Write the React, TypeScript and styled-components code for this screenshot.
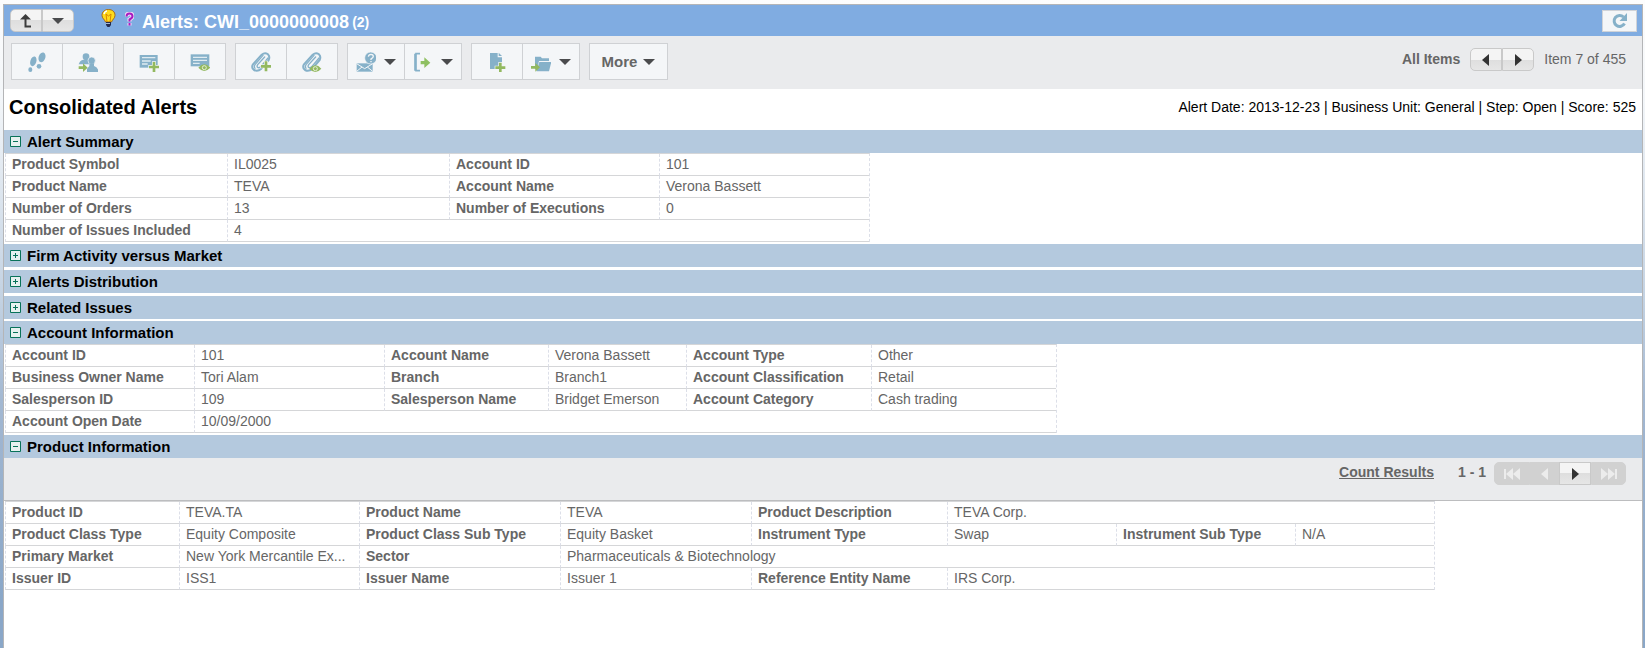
import React, { useState } from 'react';
import styled, { createGlobalStyle, css } from 'styled-components';

const GlobalStyle = createGlobalStyle`
  *, *::before, *::after { box-sizing: border-box; }
  body {
    margin: 0;
    font: 14px/21px "Liberation Sans", Arial, Helvetica, sans-serif;
    color: #666;
    background: #fff;
  }
  button { font: inherit; color: inherit; cursor: pointer; }
  h1, h2 { margin: 0; }
  svg { display: block; flex: none; }
`;

const Page = styled.div`
  min-height: 100vh;
  display: flex;
  padding: 4px 2px 0 3px;
  background: linear-gradient(#fdfdfd 0, #f3f6f9 100px, #c3d2e2 300px, #a3b8d2 400px, #8aa7c8 600px);
`;

const Frame = styled.main`
  flex: 1;
  min-width: 0;
  background: #fff;
  border: 1px solid #b4b5b7;
  border-bottom: 0;
`;

const TitleBar = styled.header`
  display: flex;
  align-items: center;
  height: 31px;
  padding: 0 5px 0 6px;
  background: #80ace1;
  color: #fff;
`;

const ButtonPair = styled.div`
  display: flex;
`;

const PillButton = styled.button<{ $width: number; $side?: 'left' | 'right' }>`
  display: flex;
  align-items: center;
  justify-content: center;
  width: ${p => p.$width}px;
  height: 23px;
  padding: 0;
  border: 1px solid #c9c9c9;
  background: linear-gradient(#f4f4f4 50%, #dedede 50%, #e6e6e6);
  border-radius: ${p => (p.$side === 'left' ? '5px 0 0 5px' : p.$side === 'right' ? '0 5px 5px 0' : '0')};
  &:disabled {
    background: #d1d1d1;
    border-color: #d1d1d1;
    cursor: default;
  }
`;

const HeaderIcons = styled.div`
  display: flex;
  align-items: center;
  gap: 9px;
  margin: 0 8px 4px 27px;
`;

const AlertName = styled.h1`
  flex: 1;
  padding-top: 2px;
  font-size: 18px;
  line-height: 24px;
`;

const AlertCount = styled.span`
  margin-left: 3px;
  font-size: 14px;
  vertical-align: 1px;
`;

const RefreshButton = styled.button`
  display: flex;
  align-items: center;
  justify-content: center;
  width: 35px;
  height: 22px;
  padding: 0;
  border: 1px solid #d0d3d8;
  background: #f4f6f8;
`;

const Toolbar = styled.div`
  display: flex;
  align-items: flex-start;
  gap: 9px;
  height: 53px;
  padding: 7px 16px 0 7px;
  background: #eaebed;
`;

const ToolGroup = styled.div`
  display: flex;
  border: 1px solid #cfd1d4;
  background: #f4f6f8;
`;

const ToolButton = styled.button<{ $menu?: boolean }>`
  box-sizing: content-box;
  display: flex;
  align-items: center;
  justify-content: center;
  gap: 8px;
  width: ${p => (p.$menu ? 56 : 50)}px;
  height: 35px;
  padding: 0;
  border: 0;
  background: none;
  & + & {
    border-left: 1px solid #cfd1d4;
  }
`;

const MoreButton = styled(ToolButton)`
  width: 77px;
  gap: 6px;
  font-size: 15px;
  font-weight: bold;
`;

const ItemNav = styled.nav`
  display: flex;
  align-items: center;
  gap: 10px;
  margin-left: auto;
  padding-top: 5px;
`;

const Strong = styled.span`
  font-weight: bold;
`;

const Heading = styled.div`
  display: flex;
  align-items: center;
  justify-content: space-between;
  height: 41px;
  padding: 0 6px 5px 5px;
  color: #000;
`;

const PageTitle = styled.h1`
  font-size: 20px;
  line-height: 24px;
`;

const Facts = styled.p`
  margin: 0;
`;

const SectionTitle = styled.h2`
  font-size: 15px;
  line-height: 23px;
`;

const SectionToggle = styled.button`
  display: flex;
  align-items: center;
  gap: 6px;
  width: 100%;
  height: 23px;
  padding: 0 6px 1px;
  border: 0;
  background: #b4c9de;
  color: #000;
  text-align: left;
`;

const SectionBox = styled.section`
  & + & {
    margin-top: 2px;
  }
  &[data-open='false'] + &[data-open='false'] {
    margin-top: 3px;
  }
`;

const Pager = styled.div`
  display: flex;
  align-items: flex-start;
  justify-content: flex-end;
  height: 43px;
  padding: 4px 16px 0;
  background: #eaebed;
  border-bottom: 1px solid #bcbdbf;
  font-weight: bold;
`;

const CountLink = styled.a`
  margin-right: 24px;
  color: inherit;
`;

const PageRange = styled.span`
  margin-right: 8px;
`;

const DataTable = styled.table`
  table-layout: fixed;
  width: min-content;
  margin-left: 1px;
  border-collapse: separate;
  border-spacing: 0;
  border-top: 1px solid #d5d6d8;
  border-right: 1px dashed #dcdfe8;
`;

const cell = css`
  height: 22px;
  padding: 0 6px;
  border-left: 1px dashed #dcdfe8;
  border-bottom: 1px solid #d5d6d8;
  text-align: left;
  white-space: nowrap;
  overflow: hidden;
  text-overflow: ellipsis;
`;

const LabelCell = styled.th`
  ${cell}
`;

const ValueCell = styled.td`
  ${cell}
`;

const Column = styled.col<{ $width: number }>`
  width: ${p => p.$width}px;
`;

const BLUE = '#86b1c9';
const GREEN = '#93b960';

const Icon = ({ children }: { children: React.ReactNode }) => (
  <svg width="20" height="20" viewBox="0 0 60 60" fill={BLUE} aria-hidden="true">
    {children}
  </svg>
);

const Plus = ({ x, y }: { x: number; y: number }) => (
  <g>
    <path d={`M${x - 6} ${y - 17}h12v11h11v12h-11v11h-12v-11h-11v-12h11z`} fill="#f4f6f8" />
    <path d={`M${x - 4} ${y - 15}h8v11h11v8h-11v11h-8v-11h-11v-8h11z`} fill={GREEN} />
  </g>
);

const Eye = ({ x, y }: { x: number; y: number }) => (
  <g>
    <path d={`M${x - 18} ${y}q18-20 36 0q-18 20-36 0z`} fill={GREEN} />
    <circle cx={x} cy={y} r="6" fill={GREEN} stroke="#e6efd8" strokeWidth="3" />
  </g>
);

const Arrow = ({ x, y }: { x: number; y: number }) => (
  <path d={`M${x} ${y - 4}h13v-9l14 13l-14 13v-9h-13z`} fill={GREEN} />
);

const Clip = () => (
  <g fill="none" stroke={BLUE} strokeWidth="6" strokeLinecap="round">
    <path d="M53 24L31 50Q20 60 9 54Q0 47 6 37L32 8Q41 1 50 6Q58 13 53 24" />
    <path d="M41 15L20 38Q16 44 21 47Q26 48 30 43L51 18M36 10L12 38Q8 44 12 49" strokeWidth="4" />
  </g>
);

const Steps = () => (
  <Icon>
    <ellipse cx="19" cy="28" rx="9" ry="15" transform="rotate(18 19 28)" />
    <ellipse cx="10" cy="53" rx="6" ry="7" />
    <ellipse cx="45" cy="16" rx="10" ry="15" transform="rotate(18 45 16)" />
    <ellipse cx="36" cy="43" rx="7" ry="7" />
  </Icon>
);

const Assign = () => (
  <Icon>
    <circle cx="24" cy="14" r="10" />
    <path d="M2 37q3-12 14-14h15l2 14z" />
    <circle cx="41" cy="26" r="11" stroke="#f4f6f8" strokeWidth="2" />
    <path d="M27 60V50l7-8v-8h14v8q12 4 14 18z" />
    <Arrow x={2} y={47} />
  </Icon>
);

const Note = ({ children }: { children: React.ReactNode }) => (
  <Icon>
    <path d="M2 9h54v38H2z" />
    <path d="M9 17h40M9 27h26M9 36h17" stroke="#dfebf1" strokeWidth="4" />
    {children}
  </Icon>
);

const ViewNote = () => (
  <Icon>
    <path d="M2 7h56v36H2z" />
    <path d="M9 16h42M9 25h42M9 34h20" stroke="#dfebf1" strokeWidth="4" />
    <Eye x={43} y={47} />
  </Icon>
);

const Mail = () => (
  <Icon>
    <path d="M2 34h48v25H2z" />
    <path d="M2 35l24 15l24-15M2 58l16-13M50 58L34 45" fill="none" stroke="#f4f6f8" strokeWidth="3" />
    <circle cx="44" cy="18" r="18" stroke="#f4f6f8" strokeWidth="2" />
    <path d="M37 14q1-7 8-7q7 1 7 6q0 4-7 8v3M45 27v4" fill="none" stroke="#f4f6f8" strokeWidth="4" />
  </Icon>
);

const Exit = () => (
  <Icon>
    <path d="M21 5H9v51h12M6 5v51" fill="none" stroke={BLUE} strokeWidth="5" />
    <g fill="#8fc062">
      <path d="M23 27h11V16l18 16l-18 16V37H23z" />
    </g>
  </Icon>
);

const NewFile = () => (
  <Icon>
    <path d="M9 3h23v13h13v35H9z" />
    <path d="M35 2l10 10H35z" />
    <Plus x={40} y={47} />
  </Icon>
);

const Folder = () => (
  <Icon>
    <path d="M12 14h17l4 5h21v8H24l-6 25h-6z" />
    <path d="M25 30h36l-7 28H16z" />
    <Arrow x={0} y={46} />
  </Icon>
);

const Caret = () => (
  <svg width="12" height="6" viewBox="0 0 12 6" aria-hidden="true">
    <path d="M0 0h12L6 6z" fill="#4a4b4d" />
  </svg>
);

const Triangle = ({ left, double, color = '#333' }: { left?: boolean; double?: boolean; color?: string }) => (
  <svg width="16" height="12" viewBox="0 0 16 12" fill={color} aria-hidden="true">
    <g transform={left ? 'matrix(-1 0 0 1 16 0)' : undefined}>
      {double ? <path d="M0 0l7 6l-7 6zM7 0l7 6l-7 6zM14 1h2v10h-2z" /> : <path d="M5 0l7 6l-7 6z" />}
    </g>
  </svg>
);

const Bulb = () => (
  <svg width="15" height="19" viewBox="0 0 15 19" aria-hidden="true">
    <path d="M7.500 .5c4 0 6.500 2.500 6.500 5.800 0 3-2.500 4-3.500 6.700h-6C3.500 10.300 1 9.300 1 6.300 1 3 3.500 .5 7.500 .5z" fill="#ffdc1c" stroke="#a56a18" />
    <path d="M5 5l1 8M10 5l-1 8M5 5l2.500 2L10 5" fill="none" stroke="#d98500" />
    <path d="M3 5q1-3 3-3" fill="none" stroke="#fff" strokeWidth="1.500" />
    <path d="M5 13h5v3l-1.500 2h-2L5 16z" fill="#222b50" />
    <path d="M5 14.500h4" stroke="#a9b9d6" />
  </svg>
);

const Help = () => (
  <svg width="9" height="14" viewBox="0 0 9 14" fill="none" aria-hidden="true">
    <path d="M1.500 4.500q0-3 3-3t3 2.800q0 1.700-3 3.200v2M4.500 11v2.500" stroke="#f1ddf6" strokeWidth="4" />
    <path d="M1.500 4.500q0-3 3-3t3 2.800q0 1.700-3 3.200v2M4.500 11v2.500" stroke="#a71bc0" strokeWidth="2" />
  </svg>
);

const UpArrow = () => (
  <svg width="12" height="14" viewBox="0 0 12 14" aria-hidden="true">
    <path d="M5.500 3v9.500H11" fill="none" stroke="#3c3c3c" strokeWidth="2" />
    <path d="M0 5.500L5.500 0L11 5.500z" fill="#3c3c3c" />
  </svg>
);

const Refresh = () => (
  <svg width="16" height="16" viewBox="0 0 16 16" aria-hidden="true">
    <path d="M12.500 10.500a5.500 5.500 0 1 1 -1-6.500" fill="none" stroke={BLUE} strokeWidth="3" />
    <path d="M15 0v8H7.500z" fill={BLUE} />
  </svg>
);

const ExpandIcon = ({ open }: { open: boolean }) => (
  <svg width="11" height="11" viewBox="0 0 11 11" aria-hidden="true">
    <path d="M.5 .5h10v10H.5z" fill="#e7f1f0" stroke="#087259" />
    <path d={open ? 'M3 5.500h5' : 'M3 5.500h5M5.500 3v5'} stroke="#087259" />
  </svg>
);

type Field = { label: string; value: string; span?: number };

const FieldTable = ({ columns, rows }: { columns: number[]; rows: Field[][] }) => (
  <DataTable>
    <colgroup>
      {columns.map((w, i) => (
        <Column key={i} $width={w} />
      ))}
    </colgroup>
    <tbody>
      {rows.map((row, i) => (
        <tr key={i}>
          {row.map(f => (
            <React.Fragment key={f.label}>
              <LabelCell scope="row">{f.label}</LabelCell>
              <ValueCell colSpan={f.span}>{f.value}</ValueCell>
            </React.Fragment>
          ))}
        </tr>
      ))}
    </tbody>
  </DataTable>
);

const Section = ({ title, initial = false, children }: { title: string; initial?: boolean; children?: React.ReactNode }) => {
  const [open, setOpen] = useState(initial);
  return (
    <SectionBox data-open={open}>
      <SectionTitle>
        <SectionToggle type="button" aria-expanded={open} onClick={() => setOpen(!open)}>
          <ExpandIcon open={open} />
          {title}
        </SectionToggle>
      </SectionTitle>
      {open && children}
    </SectionBox>
  );
};

const summary: Field[][] = [
  [{ label: 'Product Symbol', value: 'IL0025' }, { label: 'Account ID', value: '101' }],
  [{ label: 'Product Name', value: 'TEVA' }, { label: 'Account Name', value: 'Verona Bassett' }],
  [{ label: 'Number of Orders', value: '13' }, { label: 'Number of Executions', value: '0' }],
  [{ label: 'Number of Issues Included', value: '4', span: 3 }],
];

const account: Field[][] = [
  [
    { label: 'Account ID', value: '101' },
    { label: 'Account Name', value: 'Verona Bassett' },
    { label: 'Account Type', value: 'Other' },
  ],
  [
    { label: 'Business Owner Name', value: 'Tori Alam' },
    { label: 'Branch', value: 'Branch1' },
    { label: 'Account Classification', value: 'Retail' },
  ],
  [
    { label: 'Salesperson ID', value: '109' },
    { label: 'Salesperson Name', value: 'Bridget Emerson' },
    { label: 'Account Category', value: 'Cash trading' },
  ],
  [{ label: 'Account Open Date', value: '10/09/2000', span: 5 }],
];

const product: Field[][] = [
  [
    { label: 'Product ID', value: 'TEVA.TA' },
    { label: 'Product Name', value: 'TEVA' },
    { label: 'Product Description', value: 'TEVA Corp.', span: 3 },
  ],
  [
    { label: 'Product Class Type', value: 'Equity Composite' },
    { label: 'Product Class Sub Type', value: 'Equity Basket' },
    { label: 'Instrument Type', value: 'Swap' },
    { label: 'Instrument Sub Type', value: 'N/A' },
  ],
  [
    { label: 'Primary Market', value: 'New York Mercantile Ex...' },
    { label: 'Sector', value: 'Pharmaceuticals & Biotechnology', span: 5 },
  ],
  [
    { label: 'Issuer ID', value: 'ISS1' },
    { label: 'Issuer Name', value: 'Issuer 1' },
    { label: 'Reference Entity Name', value: 'IRS Corp.', span: 3 },
  ],
];

export default function App() {
  return (
    <>
      <GlobalStyle />
      <Page>
        <Frame>
          <TitleBar>
            <ButtonPair>
              <PillButton type="button" $width={32} $side="left" aria-label="Up one level"><UpArrow /></PillButton>
              <PillButton type="button" $width={32} $side="right" aria-label="Open list"><Caret /></PillButton>
            </ButtonPair>
            <HeaderIcons><Bulb /><Help /></HeaderIcons>
            <AlertName>Alerts: CWI_0000000008<AlertCount>(2)</AlertCount></AlertName>
            <RefreshButton type="button" aria-label="Refresh"><Refresh /></RefreshButton>
          </TitleBar>

          <Toolbar>
            <ToolGroup>
              <ToolButton type="button" aria-label="Steps"><Steps /></ToolButton>
              <ToolButton type="button" aria-label="Assign"><Assign /></ToolButton>
            </ToolGroup>
            <ToolGroup>
              <ToolButton type="button" aria-label="Add note"><Note><Plus x={45} y={45} /></Note></ToolButton>
              <ToolButton type="button" aria-label="View notes"><ViewNote /></ToolButton>
            </ToolGroup>
            <ToolGroup>
              <ToolButton type="button" aria-label="Add attachment"><Icon><Clip /><Plus x={45} y={43} /></Icon></ToolButton>
              <ToolButton type="button" aria-label="View attachments"><Icon><Clip /><Eye x={40} y={50} /></Icon></ToolButton>
            </ToolGroup>
            <ToolGroup>
              <ToolButton type="button" $menu aria-label="Email"><Mail /><Caret /></ToolButton>
              <ToolButton type="button" $menu aria-label="Export"><Exit /><Caret /></ToolButton>
            </ToolGroup>
            <ToolGroup>
              <ToolButton type="button" aria-label="New document"><NewFile /></ToolButton>
              <ToolButton type="button" $menu aria-label="Move to folder"><Folder /><Caret /></ToolButton>
            </ToolGroup>
            <ToolGroup>
              <MoreButton type="button">More<Caret /></MoreButton>
            </ToolGroup>
            <ItemNav aria-label="Items">
              <Strong>All Items</Strong>
              <ButtonPair>
                <PillButton type="button" $width={32} $side="left" aria-label="Previous item"><Triangle left /></PillButton>
                <PillButton type="button" $width={32} $side="right" aria-label="Next item"><Triangle /></PillButton>
              </ButtonPair>
              <span>Item 7 of 455</span>
            </ItemNav>
          </Toolbar>

          <Heading>
            <PageTitle>Consolidated Alerts</PageTitle>
            <Facts>Alert Date: 2013-12-23 | Business Unit: General | Step: Open | Score: 525</Facts>
          </Heading>

          <Section title="Alert Summary" initial>
            <FieldTable columns={[222, 222, 210, 210]} rows={summary} />
          </Section>
          <Section title="Firm Activity versus Market" />
          <Section title="Alerts Distribution" />
          <Section title="Related Issues" />
          <Section title="Account Information" initial>
            <FieldTable columns={[189, 190, 164, 138, 185, 185]} rows={account} />
          </Section>
          <Section title="Product Information" initial>
            <Pager>
              <CountLink href="#count">Count Results</CountLink>
              <PageRange>1 - 1</PageRange>
              <PillButton type="button" disabled $width={36} $side="left" aria-label="First page"><Triangle left double color="#ececec" /></PillButton>
              <PillButton type="button" disabled $width={29} aria-label="Previous page"><Triangle left color="#ececec" /></PillButton>
              <PillButton type="button" $width={32} aria-label="Next page"><Triangle /></PillButton>
              <PillButton type="button" disabled $width={35} $side="right" aria-label="Last page"><Triangle double color="#ececec" /></PillButton>
            </Pager>
            <FieldTable columns={[174, 180, 201, 191, 196, 169, 179, 139]} rows={product} />
          </Section>
        </Frame>
      </Page>
    </>
  );
}
